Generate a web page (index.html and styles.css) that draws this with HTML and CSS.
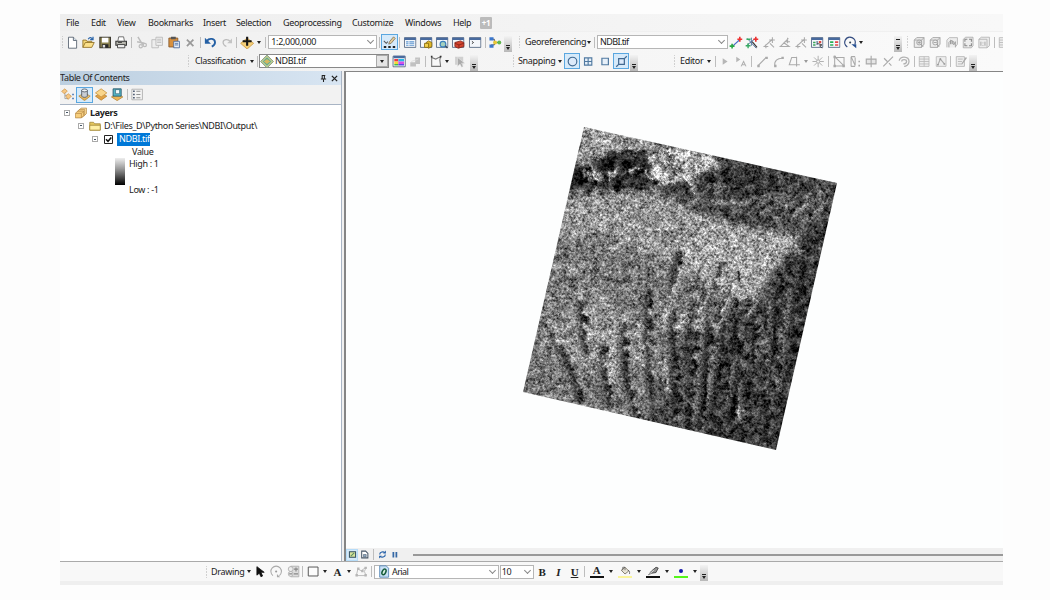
FILE: index.html
```html
<!DOCTYPE html>
<html lang="en">
<head>
<meta charset="utf-8">
<title>NDBI.tif</title>
<link rel="stylesheet" href="styles.css">
</head>
<body>
<svg class="defs" width="0" height="0">
  <defs>
    <linearGradient id="gold" x1="0" y1="0" x2="0" y2="1"><stop offset="0" stop-color="#ffe9a8"/><stop offset="1" stop-color="#dba23c"/></linearGradient>
    <symbol id="new" viewBox="0 0 16 16"><path d="M3.500 1.500h6l4 4v9.500h-10z" fill="#fff" stroke="#4c5866"/><path d="M9.500 1.500v4h4" fill="#dce6f0" stroke="#4c5866"/></symbol>
    <symbol id="open" viewBox="0 0 16 16"><path d="M1.500 14V5h4l1 1.500h6V8" fill="#f5d878" stroke="#8a6a20"/><path d="M1.500 14l3-6h11l-3 6z" fill="#fbe08a" stroke="#8a6a20"/><path d="M8 4c2-3 4-2 5-.5M14 1v3.500h-3.500" fill="none" stroke="#2863a8" stroke-width="1.500"/></symbol>
    <symbol id="save" viewBox="0 0 16 16"><path d="M1.500 1.500h13v13h-13z" fill="#8c8350" stroke="#37342a" stroke-width="1.300"/><path d="M4 2h8v6H4z" fill="#fff"/><path d="M4 10h8v4.500H4z" fill="#292929"/><path d="M5 11h3v3H5z" fill="#ddd"/></symbol>
    <symbol id="print" viewBox="0 0 16 16"><path d="M4 6l1-5h6l1 5" fill="#fff" stroke="#555"/><path d="M1.500 6.500h13v5h-13z" fill="#b9b9b0" stroke="#333" stroke-width="1.300"/><path d="M3.500 10.500h9v4h-9z" fill="#eee" stroke="#333"/><path d="M4 8h5" stroke="#333"/></symbol>
    <symbol id="cut" viewBox="0 0 16 16"><path d="M4 1l6 10M3 7l9 2" stroke="#bcbcbc" stroke-width="1.800" fill="none"/><circle cx="7.500" cy="12.500" r="2" fill="none" stroke="#bcbcbc" stroke-width="1.500"/><circle cx="12.500" cy="11" r="2" fill="none" stroke="#bcbcbc" stroke-width="1.500"/></symbol>
    <symbol id="copy" viewBox="0 0 16 16"><path d="M1.500 4.500h8v10h-8z" fill="#eee" stroke="#b6b6b6"/><path d="M6.500 1.500h8v10h-8z" fill="#eee" stroke="#b6b6b6"/><path d="M8 4h5M8 6h5M8 8h5" stroke="#bbb"/></symbol>
    <symbol id="paste" viewBox="0 0 16 16"><path d="M1.500 2.500h11v11h-11z" fill="#d8903e" stroke="#80552a"/><path d="M4 1h6v3H4z" fill="#555"/><path d="M7.500 6.500h7v8h-7z" fill="#e7effa" stroke="#41639a"/><path d="M9 9h4M9 11h4" stroke="#41639a"/></symbol>
    <symbol id="x" viewBox="0 0 16 16"><path d="M4 4.500l8 8M12 4.500l-8 8" stroke="#9a9a9a" stroke-width="2.200"/></symbol>
    <symbol id="undo" viewBox="0 0 16 16"><path d="M4 6c3-4 10-3 10 2 0 3-2 4-4 5" fill="none" stroke="#2560a4" stroke-width="2.300"/><path d="M1.500 2v7.500H9z" fill="#2560a4"/></symbol>
    <symbol id="redo" viewBox="0 0 16 16"><path d="M12 7c-3-4-9-3-9 1 0 3 2 4 4 5" fill="none" stroke="#bcbcbc" stroke-width="1.500"/><path d="M14 3v6H8z" fill="#c4c4c4"/></symbol>
    <symbol id="add" viewBox="0 0 16 16"><path d="M8 2.500l8 6.500-8 7-8-7z" fill="#f5cf78" stroke="#c99840"/><path d="M8 1v11M2.500 6.500h11" stroke="#151515" stroke-width="2.600"/></symbol>
    <symbol id="edit" viewBox="0 0 16 16"><path d="M1 13.500h3M6.500 13.500h3M12 13.500h3" stroke="#222" stroke-width="2.500"/><path d="M1 6l3 3 2-2" fill="none" stroke="#555" stroke-width="1.300"/><path d="M7 10l1-3 5-6 2 2-5 6z" fill="#e3cd9c" stroke="#6d5a39" stroke-width=".8"/></symbol>
    <symbol id="win" viewBox="0 0 16 16"><path d="M1 2h14v12H1z" fill="#f4f7fb" stroke="#485b78"/><path d="M1 2h14v3H1z" fill="#486a9e"/></symbol>
    <symbol id="table" viewBox="0 0 16 16"><use href="#win"/><path d="M3 7h3M3 9h3M3 11.500h3M7 7h6M7 9h6M7 11.500h6" stroke="#5e96d0" stroke-width="1.300"/></symbol>
    <symbol id="catalog" viewBox="0 0 16 16"><use href="#win"/><path d="M8 8l3-2 4 2v5l-4 2-3-2z" fill="#e0b92b" stroke="#80630c"/><path d="M6 9h5v5H6z" fill="#f1d24c" stroke="#80630c"/></symbol>
    <symbol id="search" viewBox="0 0 16 16"><use href="#win"/><circle cx="9" cy="10" r="3.500" fill="#a5d0bd" stroke="#3e83be" stroke-width="1.500"/><path d="M12 12l2.500 3" stroke="#345" stroke-width="1.500"/></symbol>
    <symbol id="toolbox" viewBox="0 0 16 16"><use href="#win"/><path d="M4 8l7-2 4 2v5l-7 2-4-2z" fill="#d3442e" stroke="#832117"/><path d="M4 9l5 2 6-2M9 11v4" stroke="#832117" fill="none"/></symbol>
    <symbol id="python" viewBox="0 0 16 16"><use href="#win"/><path d="M4 6.500l2 1.500L4 9.500" fill="none" stroke="#222"/></symbol>
    <symbol id="model" viewBox="0 0 16 16"><path d="M3 4h4v7H3M7 8h5" fill="none" stroke="#333"/><path d="M1 1.500h5v4H1z" fill="#3a76cc"/><path d="M1 10.500h5v4H1z" fill="#3a76cc"/><circle cx="8" cy="8" r="2.400" fill="#e8c633"/><circle cx="13" cy="8" r="2.500" fill="#61b650"/></symbol>
    <symbol id="link" viewBox="0 0 16 16"><path d="M3 13L13 4" stroke="#4769c6" stroke-width="1.400"/><path d="M0 12.500h6M3 9.500v6" stroke="#28a845" stroke-width="2"/><path d="M9.500 4h6M12.500 1v6" stroke="#ed3131" stroke-width="2"/></symbol>
    <symbol id="autolink" viewBox="0 0 16 16"><path d="M2 3l11 12M2 11L12 3M7 2v10" stroke="#54749f" stroke-width="1.200"/><path d="M0 12h6M3 9v6M1 4h5" stroke="#35a962" stroke-width="1.700"/><path d="M9.500 4h6M12.500 1v6" stroke="#ed3131" stroke-width="2"/><path d="M8 7l6 7" stroke="#333" stroke-width="1.400"/></symbol>
    <symbol id="glink" viewBox="0 0 16 16"><path d="M2 13L12 4M8 5h7M12 1.500v7M1 13h6M4 10v5M9 9l5 5" stroke="#aaa" stroke-width="1.300" fill="none"/></symbol>
    <symbol id="glink2" viewBox="0 0 16 16"><path d="M2 13L12 3M7 7h7M11 2v7M1 13h12L6 8" stroke="#aaa" stroke-width="1.300" fill="none"/></symbol>
    <symbol id="geoview" viewBox="0 0 16 16"><use href="#win"/><path d="M3 7h3v2H3zM3 10h3v2H3z" fill="#39a35b"/><path d="M10 6h3v3h-3z" fill="#df473e"/><path d="M7 6h2v5H7z" fill="#7f91ab"/><path d="M8 9l6 2-3 1 3 3" fill="#e3eaf2" stroke="#333"/></symbol>
    <symbol id="geotable" viewBox="0 0 16 16"><use href="#win"/><path d="M3 7.500h4M3 11h4" stroke="#2aaf55" stroke-width="2"/><path d="M9 7.500h4M9 11h4" stroke="#e54747" stroke-width="2"/></symbol>
    <symbol id="rotate" viewBox="0 0 16 16"><path d="M4.500 13.500A6.500 6.500 0 1 1 14 10" fill="none" stroke="#334c80" stroke-width="1.600"/><circle cx="8" cy="8" r="1.300" fill="#345"/><path d="M9.500 10h6v5z" fill="#254f91"/></symbol>
    <symbol id="cube" viewBox="0 0 16 16"><path d="M2 5l3-3h9v8l-3 4H2zM2 5h9v9M11 5l3-3" fill="#ededed" stroke="#a8a8a8" stroke-width="1.200"/></symbol>
    <symbol id="zin" viewBox="0 0 16 16"><use href="#cube"/><circle cx="8" cy="8" r="3" fill="#eee" stroke="#999"/><path d="M6 8h4M8 6v4M10 10l3 3" stroke="#999"/></symbol>
    <symbol id="zout" viewBox="0 0 16 16"><use href="#cube"/><circle cx="8" cy="8" r="3" fill="#eee" stroke="#999"/><path d="M6 8h4M10 10l3 3" stroke="#999"/></symbol>
    <symbol id="pan" viewBox="0 0 16 16"><path d="M1.500 14V5l3-3h10v8l-2 3" fill="#ededed" stroke="#b0b0b0"/><path d="M4 14V8l2-2v4V5l2 1v4-4l2 1v4l2-4v7" fill="#eee" stroke="#999"/></symbol>
    <symbol id="full" viewBox="0 0 16 16"><path d="M2 4l3-2.500h9V12l-2 2.500H2z" fill="#ededed" stroke="#a8a8a8"/><path d="M4 7V4h3M9 4h3v3M12 9v3H9M7 12H4V9" fill="none" stroke="#888" stroke-width="1.300"/></symbol>
    <symbol id="one" viewBox="0 0 16 16"><path d="M1.500 4l3-2.500h10V12l-3 2.500h-10zM1.500 4h10v10.500" fill="#ededed" stroke="#b0b0b0"/><path d="M4 7v5M9 7v5M6.500 8v1M6.500 11v1" stroke="#999"/></symbol>
    <symbol id="diamond" viewBox="0 0 16 16"><path d="M8 0l8 8-8 8-8-8z" fill="#b8c990" stroke="#82977d"/><path d="M8 3l5 5-5 5-5-5z" fill="#58a894"/><path d="M4 8l4-3 4 3-4 3z" fill="#d6b85f"/></symbol>
    <symbol id="raster" viewBox="0 0 16 16"><path d="M.5 1.500h15v13H.5z" fill="#fff" stroke="#485b78"/><path d="M1 1h14v3H1z" fill="#486a9e"/><path d="M2 5h5v3H2z" fill="#ef3945"/><path d="M2 8h5v3H2z" fill="#f1d936"/><path d="M2 11h5v2H2z" fill="#3dbc54"/><path d="M7 5h7v3H7z" fill="#27b9e8"/><path d="M7 8h7v3H7z" fill="#d550e8"/><path d="M7 11h7v2H7z" fill="#5b48ea"/></symbol>
    <symbol id="gblocks" viewBox="0 0 16 16"><path d="M8 3h6v8H8zM2 9h7v5H2z" fill="#c1c1c1"/><path d="M3 8l9-3" stroke="#ddd"/></symbol>
    <symbol id="poly" viewBox="0 0 16 16"><path d="M2.500 14V3l5 2 6-3-1 4 1 8z" fill="#f8f8f8" stroke="#777" stroke-width="1.300"/><path d="M1.500 2h2M12.500 2h2" stroke="#333" stroke-width="2"/></symbol>
    <symbol id="gselect" viewBox="0 0 16 16"><path d="M3 2h10v10H3z" fill="#d0d0d0"/><path d="M6 3v11l3-3 2 4 2-1-2-4h4z" fill="#aaa" stroke="#eee" stroke-width=".6"/></symbol>
    <symbol id="circle" viewBox="0 0 16 16"><circle cx="8" cy="8" r="5.300" fill="#dceafa" stroke="#416991" stroke-width="1.400"/></symbol>
    <symbol id="grid" viewBox="0 0 16 16"><path d="M3.500 3.500h9v9h-9zM8 3.500v9M3.500 8h9" fill="#e7f0f9" stroke="#527aa1" stroke-width="1.400"/></symbol>
    <symbol id="square" viewBox="0 0 16 16"><path d="M4 4h8v8H4z" fill="#e7f0f9" stroke="#527aa1" stroke-width="1.500"/></symbol>
    <symbol id="edge" viewBox="0 0 16 16"><path d="M4.500 4.500h7v7h-7z" fill="#dceafa" stroke="#416991" stroke-width="1.500"/><path d="M1.500 14.500l3-3M11.500 4.500l3-3" stroke="#416991" stroke-width="1.500"/></symbol>
    <symbol id="gplay" viewBox="0 0 16 16"><path d="M5 4v8l6-4z" fill="#b6b6b6"/></symbol>
    <symbol id="gplaya" viewBox="0 0 16 16"><path d="M2 2v7l5-3.500z" fill="#b6b6b6"/><path d="M8 14l3-6 3 6M9 12h4" fill="none" stroke="#b0b0b0" stroke-width="1.300"/></symbol>
    <symbol id="gline" viewBox="0 0 16 16"><path d="M3 13L13 3" stroke="#aaa" stroke-width="1.400"/><path d="M2 12h3v3H2zM12 2h3v3h-3z" fill="#aaa"/></symbol>
    <symbol id="garc" viewBox="0 0 16 16"><path d="M4 13C3 7 7 4 13 4" fill="none" stroke="#aaa" stroke-width="1.400"/><path d="M3 12h3v3H3zM12 2h3v3h-3z" fill="#aaa"/></symbol>
    <symbol id="gtrace" viewBox="0 0 16 16"><path d="M2 12h9V3H5L2 12zM8 12h7M11 2v12" fill="none" stroke="#aaa" stroke-width="1.300"/></symbol>
    <symbol id="gstar" viewBox="0 0 16 16"><path d="M8 1v14M1 8h14M3 3l10 10M13 3L3 13" stroke="#b0b0b0" stroke-width="1.200"/><circle cx="8" cy="8" r="2" fill="#f5f5f5" stroke="#aaa"/></symbol>
    <symbol id="gtri" viewBox="0 0 16 16"><path d="M2.500 2v11.500H14zM2 3h12v10" fill="none" stroke="#aaa" stroke-width="1.300"/><path d="M1 1h3v3H1zM1 12h3v3H1zM12 12h3v3h-3z" fill="#aaa"/></symbol>
    <symbol id="gcut" viewBox="0 0 16 16"><path d="M3 14V2l5 11V3M3 2h5M3 14h5" fill="none" stroke="#aaa" stroke-width="1.300"/><path d="M12 7h2v2h-2zM12 12h2v2h-2z" fill="#aaa"/></symbol>
    <symbol id="gcross" viewBox="0 0 16 16"><path d="M2 5h12v6H2zM8 1v14" fill="#e5e5e5" stroke="#aaa" stroke-width="1.400"/></symbol>
    <symbol id="gslash" viewBox="0 0 16 16"><path d="M2 14L14 2M3 4l4 4M9 10l3 3" stroke="#aaa" stroke-width="1.400"/></symbol>
    <symbol id="grot" viewBox="0 0 16 16"><path d="M2 7c0-6 12-6 12 1 0 4-4 6-6 6M5 8c0-3 6-3 6 0 0 2-2 3-4 3" fill="none" stroke="#b2b2b2" stroke-width="1.600"/></symbol>
    <symbol id="gtable" viewBox="0 0 16 16"><path d="M2 2h12v12H2zM8 2v12M2 5h12M2 8h12M2 11h12" fill="#eee" stroke="#b8b8b8"/></symbol>
    <symbol id="gsketch" viewBox="0 0 16 16"><path d="M2 2h12v12H2z" fill="#eee" stroke="#b8b8b8"/><path d="M4 12l3-7 5 6" fill="none" stroke="#aaa" stroke-width="1.300"/><path d="M6 4h2v2H6zM3 11h2v2H3zM11 10h2v2h-2z" fill="#999"/></symbol>
    <symbol id="gform" viewBox="0 0 16 16"><path d="M2 2h10v12H2zM4 5h6M4 8h5M4 11h4" fill="#eee" stroke="#b0b0b0"/><path d="M8 11l6-9 1 2-6 8z" fill="#aaa"/></symbol>
    <symbol id="bydraw" viewBox="0 0 16 16"><path d="M4 5v8h5M4 9h5" fill="none" stroke="#999"/><path d="M0 4l4-3 3 3-4 3zM5 10l3-3 4 3-4 4z" fill="#f6c783" stroke="#c98f42" stroke-width=".8"/><path d="M13 8h2M13 13h2" stroke="#4574b3" stroke-width="1.800"/></symbol>
    <symbol id="bysrc" viewBox="0 0 16 16"><path d="M1 10l7-4 7 4-7 5.500z" fill="url(#gold)" stroke="#b68538"/><path d="M4.500 3v7c0 2 7 2 7 0V3z" fill="#c9ced4" stroke="#4b535e"/><ellipse cx="8" cy="3" rx="3.500" ry="1.800" fill="#eef2f5" stroke="#4b535e"/></symbol>
    <symbol id="byvis" viewBox="0 0 16 16"><path d="M1 10l7-4 7 4-7 5z" fill="#e3a243" stroke="#b68538"/><path d="M1 6l7-5 7 5-7 5z" fill="#f9d58a" stroke="#c89544"/></symbol>
    <symbol id="bysel" viewBox="0 0 16 16"><path d="M1 11l7-4 7 4-7 4.500z" fill="#edb556" stroke="#b68538"/><path d="M3 1h10v9H3z" fill="#55b5c5" stroke="#245468"/><path d="M6 2v5h5V2z" fill="#f2fafa" stroke="#245468" stroke-width=".7"/></symbol>
    <symbol id="opts" viewBox="0 0 16 16"><path d="M1.500 1.500h13v13h-13z" fill="#f4f4f4" stroke="#aaa"/><path d="M3 4h2M3 8h2M3 12h2" stroke="#46536b" stroke-width="1.700"/><path d="M7 4h5M7 8h5M7 12h5" stroke="#777"/></symbol>
    <symbol id="layers" viewBox="0 0 16 16"><path d="M5 4.500l3-3h7.500v7l-3 3H5z" fill="#ffe2a1" stroke="#b58a48"/><path d="M3 6.500l2.500-3h7.500v7l-3 3H3z" fill="#fbd78d" stroke="#b58a48"/><path d="M.5 8.500l3-3h8v6l-3 3h-8zM.5 8.500h8v6M8.500 8.500l3-3" fill="#f8cf7d" stroke="#b58a48"/></symbol>
    <symbol id="folder" viewBox="0 0 16 16"><path d="M1 13.500V3h5l1.500 2H15v8.500z" fill="#e5c75f" stroke="#9e8234"/><path d="M1 13.500V7h14v6.500z" fill="#fff0a6" stroke="#9e8234"/></symbol>
    <symbol id="pointer" viewBox="0 0 16 16"><path d="M4 2v10.500l3-2.500 2 4.500 2-1-2-4.500h4z" fill="#111" stroke="#111"/></symbol>
    <symbol id="drot" viewBox="0 0 16 16"><path d="M4 13a6.500 6.500 0 1 1 8 0" fill="none" stroke="#aaa" stroke-width="1.300"/><circle cx="8" cy="8" r="1.300" fill="#999"/><path d="M9 11v4h4z" fill="#aaa"/></symbol>
    <symbol id="dzoom" viewBox="0 0 16 16"><path d="M5 1.500h10v13H5z" fill="#ddd" stroke="#aaa"/><circle cx="5" cy="5" r="3" fill="#eee" stroke="#aaa"/><circle cx="5" cy="11" r="3" fill="#eee" stroke="#aaa"/><path d="M9 5h5M11.500 3v5M9 11h5M3 11h4" stroke="#888" stroke-width="1.500"/></symbol>
    <symbol id="rect" viewBox="0 0 16 16"><path d="M2 2.500h12v11H2z" fill="#fcfcfc" stroke="#555" stroke-width="1.200"/></symbol>
    <symbol id="verts" viewBox="0 0 16 16"><path d="M2 13l2-8 4 2 6-4-2 5 2 5z" fill="none" stroke="#b0b0b0"/><path d="M1 11h3v3H1zM3 3h3v3H3zM12 2h3v3h-3zM12 11h3v3h-3zM8 6h3v3H8z" fill="#b6b6b6"/></symbol>
    <symbol id="font" viewBox="0 0 16 16"><path d="M2.500 1h8l3 3v11h-11z" fill="#c9e0f5" stroke="#4c80b1"/><ellipse cx="8" cy="8.500" rx="2.200" ry="3.700" fill="#d7ede0" stroke="#145b3b" stroke-width="1.800" transform="rotate(25 8 8)"/></symbol>
    <symbol id="bucket" viewBox="0 0 16 12"><path d="M3 5l5-4 5 5-5 4z" fill="#e7e4d8" stroke="#665e4c"/><path d="M5 5V1h3v4M12 5c3 1 2 3 2 5" fill="none" stroke="#555"/></symbol>
    <symbol id="brush" viewBox="0 0 16 12"><path d="M2 11l4-5 6-5 3 1-3 6-6 1z" fill="#929292" stroke="#333"/><path d="M2 11l7-6" stroke="#fff"/></symbol>
    <symbol id="refresh" viewBox="0 0 16 16"><path d="M3 8c0-5 7-6 9-3M13 8c0 5-7 6-9 3" fill="none" stroke="#235fa7" stroke-width="2"/><path d="M9 6h5V1zM7 10H2v5z" fill="#235fa7"/></symbol>
    <symbol id="pause" viewBox="0 0 16 16"><path d="M3 2h3.500v11H3zM9 2h3.500v11H9z" fill="#3568a5"/></symbol>
    <symbol id="map" viewBox="0 0 16 16"><path d="M2.500 3h11v10h-11z" fill="#d8e39c" stroke="#334f60" stroke-width="1.800"/><path d="M5 11l6-6" stroke="#5c8c61" stroke-width="1.800"/></symbol>
    <symbol id="page" viewBox="0 0 16 16"><path d="M3 2h7l4 4v8H3z" fill="#fff" stroke="#465567" stroke-width="1.800"/><path d="M6 8h5v4H6z" fill="#8da9c4" stroke="#465567"/></symbol>
  </defs>
</svg>

<div class="app">
  <nav class="menu">
    <span class="m25">File</span><span class="m26">Edit</span><span class="m31">View</span><span class="m55">Bookmarks</span><span class="m33">Insert</span><span class="m47">Selection</span><span class="m69">Geoprocessing</span><span class="m53">Customize</span><span class="m48">Windows</span><span class="m27">Help</span><b class="badge">+1</b>
  </nav>

  <div class="row">
    <div class="bar standard">
      <i class="grip"></i>
      <svg class="ic"><use href="#new"/></svg><svg class="ic"><use href="#open"/></svg><svg class="ic"><use href="#save"/></svg><svg class="ic"><use href="#print"/></svg>
      <i class="sep"></i>
      <svg class="ic"><use href="#cut"/></svg><svg class="ic"><use href="#copy"/></svg><svg class="ic"><use href="#paste"/></svg><svg class="ic"><use href="#x"/></svg>
      <i class="sep"></i>
      <svg class="ic"><use href="#undo"/></svg><svg class="ic"><use href="#redo"/></svg>
      <i class="sep"></i>
      <svg class="ic"><use href="#add"/></svg><i class="dd"></i>
      <i class="sep wide"></i>
      <div class="combo scale"><span>1:2,000,000</span><i class="chev"></i></div>
      <i class="sep"></i>
      <span class="toggle"><svg class="ic"><use href="#edit"/></svg></span>
      <i class="sep"></i>
      <svg class="ic"><use href="#table"/></svg><svg class="ic"><use href="#catalog"/></svg><svg class="ic"><use href="#search"/></svg><svg class="ic"><use href="#toolbox"/></svg><svg class="ic"><use href="#python"/></svg>
      <i class="sep"></i>
      <svg class="ic"><use href="#model"/></svg><i class="over"></i>
    </div>
    <div class="bar georef">
      <i class="grip"></i><span class="lbl l-geo">Georeferencing</span><i class="dd"></i><i class="sep wide"></i>
      <div class="combo geo"><span class="tight">NDBI.tif</span><i class="chev"></i></div>
      <svg class="ic"><use href="#link"/></svg><svg class="ic"><use href="#autolink"/></svg><svg class="ic"><use href="#glink"/></svg><svg class="ic"><use href="#glink2"/></svg><svg class="ic"><use href="#glink"/></svg><svg class="ic"><use href="#geoview"/></svg><svg class="ic"><use href="#geotable"/></svg><svg class="ic"><use href="#rotate"/></svg><i class="dd"></i>
      <i class="over more"></i>
    </div>
    <div class="bar layout">
      <i class="grip"></i>
      <svg class="ic"><use href="#zin"/></svg><svg class="ic"><use href="#zout"/></svg><svg class="ic"><use href="#pan"/></svg><svg class="ic"><use href="#full"/></svg><svg class="ic"><use href="#one"/></svg><i class="sep"></i><svg class="ic"><use href="#gtable"/></svg>
    </div>
  </div>

  <div class="row second">
    <div class="bar classify">
      <i class="grip"></i><span class="lbl l-class">Classification</span><i class="dd"></i><i class="sep"></i>
      <div class="combo old"><svg class="ic"><use href="#diamond"/></svg><span>NDBI.tif</span><b><i class="dd"></i></b></div>
      <i class="sep none"></i><svg class="ic"><use href="#raster"/></svg><svg class="ic"><use href="#gblocks"/></svg><i class="sep"></i><svg class="ic"><use href="#poly"/></svg><i class="dd"></i><svg class="ic"><use href="#gselect"/></svg><i class="over"></i>
    </div>
    <div class="bar snap">
      <i class="grip"></i><span class="lbl l-snap">Snapping</span><i class="dd"></i>
      <span class="toggle"><svg class="ic"><use href="#circle"/></svg></span><svg class="ic"><use href="#grid"/></svg><svg class="ic"><use href="#square"/></svg><span class="toggle"><svg class="ic"><use href="#edge"/></svg></span><i class="over"></i>
    </div>
    <div class="bar editor">
      <i class="grip"></i><span class="lbl l-edit">Editor</span><i class="dd"></i><i class="sep"></i>
      <svg class="ic"><use href="#gplay"/></svg><svg class="ic"><use href="#gplaya"/></svg><i class="sep"></i>
      <svg class="ic"><use href="#gline"/></svg><svg class="ic"><use href="#garc"/></svg><svg class="ic"><use href="#gtrace"/></svg><i class="dd off"></i><svg class="ic"><use href="#gstar"/></svg><i class="sep"></i>
      <svg class="ic"><use href="#gtri"/></svg><svg class="ic"><use href="#gcut"/></svg><svg class="ic"><use href="#gcross"/></svg><svg class="ic"><use href="#gslash"/></svg><svg class="ic"><use href="#grot"/></svg><i class="sep"></i>
      <svg class="ic"><use href="#gtable"/></svg><svg class="ic"><use href="#gsketch"/></svg><i class="sep"></i><svg class="ic"><use href="#gform"/></svg><i class="over"></i>
    </div>
  </div>

  <main class="work">
    <aside class="toc">
      <header><span>Table Of Contents</span>
        <svg class="pin" viewBox="0 0 8 8"><path d="M2 .5h4M2.500 .5v4M5 .5v4M1 4.500h6M4 5v3" stroke="#222" stroke-width="1.200" fill="none"/></svg>
        <svg class="close" viewBox="0 0 8 8"><path d="M1 1l6 6M7 1L1 7" stroke="#222" stroke-width="1.500"/></svg>
      </header>
      <div class="toctools"><svg class="ic"><use href="#bydraw"/></svg><span class="toggle"><svg class="ic"><use href="#bysrc"/></svg></span><svg class="ic"><use href="#byvis"/></svg><svg class="ic"><use href="#bysel"/></svg><i class="sep"></i><svg class="ic"><use href="#opts"/></svg></div>
      <div class="tree">
        <div class="node n1"><i class="minus"></i><svg class="ti"><use href="#layers"/></svg><strong>Layers</strong></div>
        <div class="node n2"><i class="minus"></i><svg class="ti"><use href="#folder"/></svg><span class="path">D:\Files_D\Python Series\NDBI\Output\</span></div>
        <div class="node n3"><i class="minus"></i><svg class="check" viewBox="0 0 9 9"><path d="M.5.5h8v8h-8z" fill="#fff" stroke="#222"/><path d="M2 4.300l2 2L7.300 2.500" fill="none" stroke="#111" stroke-width="1.500"/></svg><span class="sel">NDBI.tif</span></div>
        <div class="value">Value</div>
        <div class="legend"><i class="ramp"></i><div class="range"><span>High : 1</span><span>Low : -1</span></div></div>
      </div>
    </aside>
    <section class="view">
      <div class="canvas">
        <svg class="scene" viewBox="515 120 330 340">
          <defs>
            <clipPath id="frame"><path d="M584 127L837 183L776 450L523 392Z"/></clipPath>
            <filter id="terrain" filterUnits="userSpaceOnUse" x="515" y="120" width="330" height="340" color-interpolation-filters="sRGB">
              <feGaussianBlur in="SourceGraphic" stdDeviation="1.800" result="soft"/>
              <feTurbulence type="fractalNoise" baseFrequency=".13" numOctaves="4" seed="8" result="warp"/>
              <feDisplacementMap in="soft" in2="warp" scale="14" xChannelSelector="R" yChannelSelector="G" result="land"/>
              <feTurbulence type="fractalNoise" baseFrequency=".42" numOctaves="3" seed="21"/>
              <feColorMatrix values="1.400 0 0 0 -.2  1.400 0 0 0 -.2  1.400 0 0 0 -.2  0 0 0 0 1" result="grain"/>
              <feComposite in="land" in2="grain" operator="arithmetic" k1=".8" k2=".6" k3=".24" k4="-.12" result="mix"/>
              <feColorMatrix in="warp" values="2 0 0 0 -.5  2 0 0 0 -.5  2 0 0 0 -.5  0 0 0 0 1" result="patch"/>
              <feComposite in="mix" in2="patch" operator="arithmetic" k2="1" k3=".32" k4="-.16"/>
            </filter>
          </defs>
          <g clip-path="url(#frame)">
            <g filter="url(#terrain)" fill="none" stroke-linecap="round">
              <path d="M500 100h360v370H500z" fill="#777"/>
              <path d="M560 195L655 195L720 222L800 238L790 280L740 300L680 270L610 235L560 240z" fill="#949494"/>
              <path d="M700 225L800 236L785 285L740 300L690 265z" fill="#a3a3a3"/>
              <path d="M540 330L590 290L640 320L630 370L550 360z" fill="#8e8e8e"/>
              <path d="M655 385L690 325L760 290L800 235L850 190V470H640z" fill="#4d4d4d"/>
              <path d="M720 340L775 290L805 235L850 190V470H700z" fill="#3a3a3a"/>
              <path d="M565 120H640L720 140L850 170V215L800 232L745 225L700 210L655 189L560 193z" fill="#474747"/>
              <path d="M582 122L640 135L665 150L620 152L588 164L575 160z" fill="#999"/>
              <path d="M570 168L590 162L618 150L655 155L660 183L570 190z" fill="#262626"/>
              <path d="M652 156L672 146L712 156L722 165L690 178L662 184L650 172z" fill="#c0c0c0"/>
              <path d="M592 165L600 180M584 172l6 6M645 172L660 182M690 178L694 192M630 172l8-5M610 180l8-12" stroke="#ccc" stroke-width="3.500"/>
              <path d="M700 175L730 165L780 170L778 200L710 195z" fill="#383838"/>
              <path d="M655 160l16 10M664 150l10 18M640 163l14-10M682 160l-12 18M700 155l-9 15" stroke="#333" stroke-width="2.500"/>
              <path d="M688 202C710 195 735 207 752 201S775 202 787 202M712 193L726 188M708 188l14-5M776 220L795 200M790 220L828 190M800 225l28-22M760 215l18-12M812 195l-12 16" stroke="#8d8d8d" stroke-width="2.500"/>
              <path d="M640 240q-20 0-32 14M660 230q-20 10-35 6M570 220q18-8 30 3t28 3M550 265q20 10 38-4M560 300q20-15 40-3" stroke="#a7a7a7" stroke-width="3"/>
              <g stroke="#424242" stroke-width="7">
                <path d="M552 337Q572 365 580 403M580 305L585 350M602 345L606 405M625 325Q618 365 636 415M648 292L646 360L655 415M678 255Q668 290 672 340L677 430M690 290L686 345M708 300L694 340"/>
              </g>
              <g stroke="#a8a8a8" stroke-width="5">
                <path d="M690 250Q668 300 665 330M709 245Q690 290 682 330M725 255Q705 290 700 330M744 270L716 328M765 275L748 315M593 325L596 370M612 320L613 380M639 320L643 365M665 360L667 392"/>
              </g>
              <g stroke="#222" stroke-width="4">
                <path d="M676 350L674 420M692 350L688 430M710 325L700 425M726 320L710 430M735 300L736 360L728 430M755 330L740 435M780 280L765 440M805 250L780 445"/>
                <path d="M700 270L688 310M720 265L706 315M738 275L720 310" stroke="#444"/>
              </g>
              <path d="M789 241L800 253" stroke="#909090" stroke-width="7"/>
              <path d="M759 318L764 340L756 360M741 332L744 350M740 390V422M731 411L756 415M816 310L790 420M750 345L746 375M770 300L766 400M790 290L778 390M718 340L708 400M700 345L696 410M735 360L728 400" stroke="#979797" stroke-width="2"/>
              <path d="M739 410v5" stroke="#ddd" stroke-width="4"/>
            </g>
          </g>
        </svg>
      </div>
      <footer class="viewbar"><span class="toggle mini"><svg class="vi"><use href="#map"/></svg></span><svg class="vi"><use href="#page"/></svg><i class="sep"></i><svg class="vi"><use href="#refresh"/></svg><svg class="vi"><use href="#pause"/></svg><i class="scroll"></i></footer>
    </section>
  </main>

  <div class="row draw">
    <div class="bar drawing">
      <i class="grip"></i><span class="lbl l-draw">Drawing</span><i class="dd"></i>
      <svg class="ic"><use href="#pointer"/></svg><svg class="ic"><use href="#drot"/></svg><svg class="ic"><use href="#dzoom"/></svg><i class="sep"></i>
      <svg class="ic"><use href="#rect"/></svg><i class="dd"></i><b class="ser">A</b><i class="dd"></i><svg class="ic"><use href="#verts"/></svg><i class="sep"></i>
      <div class="combo face"><svg class="ic"><use href="#font"/></svg><span class="tight">Arial</span><i class="chev"></i></div>
      <div class="combo size"><span>10</span><i class="chev"></i></div>
      <b class="ser">B</b><b class="ser it">I</b><b class="ser un">U</b><i class="sep"></i>
      <span class="ink black"><b>A</b></span><i class="dd"></i>
      <span class="ink yellow"><svg><use href="#bucket"/></svg></span><i class="dd"></i>
      <span class="ink black"><svg><use href="#brush"/></svg></span><i class="dd"></i>
      <span class="ink green"><i class="dot"></i></span><i class="dd"></i><i class="over"></i>
    </div>
  </div>
</div>
</body>
</html>
```
FILE: styles.css
```css
* { box-sizing: border-box; }
body { margin: 0; padding: 14px 47px 15px 60px; height: 600px; overflow: hidden; background: #fdfdfd; color: #222; font: 9px/12px "Noto Sans", "Open Sans", sans-serif; letter-spacing: -.33px; }
i { font-style: normal; }
.defs { position: absolute; }
.app { width: 943px; height: 571px; display: flex; flex-direction: column; background: #f0f0f0; overflow: hidden; }
.menu { height: 17px; margin-bottom: 1px; display: flex; align-items: center; padding-left: 6px; background: linear-gradient(90deg, #eee, #f8f8f8); white-space: nowrap; }
.menu span { flex: none; }
.m25 { width: 25px; } .m26 { width: 26px; } .m31 { width: 31px; } .m55 { width: 55px; } .m33 { width: 33px; } .m47 { width: 47px; } .m69 { width: 69px; } .m53 { width: 53px; } .m48 { width: 48px; } .m27 { width: 27px; }
.badge { width: 12px; height: 12px; background: #bbb; color: #fff; font-size: 8px; line-height: 11px; text-align: center; border-radius: 1px; }

.row { height: 20px; flex: none; display: flex; background: linear-gradient(90deg, #f0f0f0, #fafafa); white-space: nowrap; overflow: hidden; }
.second { height: 19px; padding-left: 126px; }
.second .bar { padding-bottom: 1px; }
.second .over { margin-bottom: -1px; }
.bar { flex: none; height: 100%; display: flex; align-items: center; }
.bar > *, .toctools > * { flex: none; }
.standard { width: 455px; }
.georef { width: 389px; }
.layout { width: 120px; }
.classify { width: 324px; }
.snap { width: 162px; }
.ic { width: 16.3px; height: 13px; display: block; }
.grip { width: 4px; height: 12px; background: radial-gradient(circle, #aaa 0 .7px, transparent 1px) center / 3px 3px repeat-y; }
.georef .grip { width: 8px; }
.layout .grip { width: 7px; }
.sep { width: 4px; height: 11px; background: linear-gradient(#bdbdbd, #bdbdbd) center / 1px 100% no-repeat; }
.sep.wide { width: 5px; }
.sep.none { background: none; }
.dd { width: 8px; height: 8px; display: flex; align-items: center; justify-content: center; }
.dd::before { content: ""; border: 2.500px solid transparent; border-top: 3px solid #222; border-bottom: 0; }
.dd.off::before { border-top-color: #999; }
.combo { height: 14px; border: 1px solid #b6b6b6; background: #fff; display: flex; align-items: center; padding-left: 1px; }
.combo > span { flex: 1; }
.tight { letter-spacing: -.6px; }
.scale { width: 109px; padding-left: 2px; }
.geo { width: 131px; padding-left: 2px; }
.chev { width: 5px; height: 5px; border: solid #888; border-width: 0 1px 1px 0; transform: rotate(45deg); margin: -3px 3px 0 0; }
.toggle { width: 16.3px; height: 16px; border: 1px solid #5aa7e0; background: #d6eafa; display: flex; align-items: center; justify-content: center; }
.toggle .ic { flex: none; width: 13px; }
.over { width: 8px; height: 16px; align-self: flex-end; background: linear-gradient(#f3f3f3, #b8b8b8); display: flex; flex-direction: column; align-items: center; justify-content: flex-end; padding-bottom: 2px; }
.over::before { content: ""; width: 4px; height: 1px; background: #222; margin-bottom: 1px; }
.over::after { content: ""; border: 2px solid transparent; border-top: 3px solid #222; border-bottom: 0; }
.standard .over { margin-left: 1px; }
.georef .over { margin-left: 30px; }
.more::before { height: 7px; background: linear-gradient(#222 0 1px, transparent 1px 6px, #222 6px); }
.l-geo { width: 61px; } .georef .lbl { margin-left: 2px; } .georef > .dd { width: 7px; margin-left: -1px; }
.classify .lbl { width: 53px; margin-left: 5px; }
.classify .dd { width: 7px; }
.old { width: 130px; padding: 0; border-color: #888; }
.old .ic { width: 14px; }
.old > span { padding-left: 1px; }
.old b { width: 12px; height: 12px; background: #e5e5e5; border: 1px solid #aaa; display: flex; align-items: center; justify-content: center; }
.classify > .sep.none { width: 2px; }
.classify > .over { margin-left: 3px; }
.snap .lbl { width: 38px; margin-left: 3px; }
.snap .grip { margin-left: 1px; }
.snap .over { margin-left: 1px; }
.editor .lbl { width: 25px; margin-left: 4px; }

.work { flex: 1; display: flex; min-height: 0; border-bottom: 1px solid #aaa; }
.toc { width: 282px; display: flex; flex-direction: column; border-right: 1px solid #a8b4c4; }
.toc header { height: 14px; display: flex; align-items: center; background: linear-gradient(90deg, #bccfe0, #d8e5f2); }
.toc header span { flex: 1; }
.pin { width: 7px; height: 7px; margin-right: 4px; }
.close { width: 7px; height: 7px; margin-right: 3px; }
.toctools { height: 19px; display: flex; align-items: center; background: #f2f2f2; }
.tree { flex: 1; background: #fff; border-top: 1px solid #a8b4c4; padding-top: 1px; }
.node { height: 13.300px; display: flex; align-items: center; }
.n1 { padding-left: 4px; } .n2 { padding-left: 18px; } .n3 { padding-left: 32px; }
.minus { width: 6px; height: 6px; border: 1px solid #aaa; background: linear-gradient(#456, #456) center / 2px 1px no-repeat #fff; margin-right: 5px; }
.ti { width: 12px; height: 12px; margin-right: 3px; }
.check { width: 9px; height: 9px; margin: 0 4px 0 1px; }
.sel { background: #0078d7; color: #fff; height: 13px; padding: 0 2px; width: 33px; }
.value { padding-left: 72px; height: 12px; line-height: 12px; }
.legend { display: flex; padding-left: 55px; line-height: 11px; }
.ramp { width: 10px; height: 27px; background: linear-gradient(#eee, #999 40%, #000); }
.range { display: flex; flex-direction: column; justify-content: space-between; height: 37px; margin-left: 4px; }

.view { flex: 1; margin-left: 2px; border-left: 2px solid #858585; border-top: 1px solid #858585; display: flex; flex-direction: column; }
.canvas { flex: 1; background: #fdfefe; padding: 48px 0 0 169px; min-height: 0; }
.scene { width: 330px; height: 340px; display: block; }
.viewbar { height: 13px; display: flex; align-items: center; background: #f0f0f0; }
.mini { width: 12px; height: 12px; border-color: #b6dcf8; }
.vi { width: 9px; height: 9px; flex: none; }
.mini + .vi { margin: 0 2px; }
.viewbar .sep { margin-right: 3px; }
.viewbar .vi:nth-child(5) { margin-left: 4px; width: 8px; height: 8px; }
.scroll { height: 2px; flex: 1; background: #999; margin-left: 14px; }
.draw { height: 23px; align-items: flex-start; background: #f8f8f8; border-bottom: 4px solid #efefef; padding-left: 144px; }
.drawing .lbl { width: 34px; margin-left: 3px; }
.drawing > .ic:nth-child(4) { margin-left: -1px; }
.ser { width: 16.3px; text-align: center; font: bold 11px/14px "Liberation Serif", serif; }
.it { font-style: italic; } .un { text-decoration: underline; }
.face { width: 125px; margin-right: 1px; }
.size { width: 34px; }
.ink { width: 14px; height: 13px; margin: 0 3px; border-bottom: 2px solid #111; display: flex; align-items: center; justify-content: center; }
.ink b { font: bold 11px/11px "Liberation Serif", serif; }
.ink svg { width: 12px; height: 10px; }
.yellow { border-color: #fbf59b; } .green { border-color: #56f51b; }
.dot { width: 4px; height: 4px; border-radius: 50%; background: #1515ad; }
.drawing .over { margin-left: 1px; }
```
